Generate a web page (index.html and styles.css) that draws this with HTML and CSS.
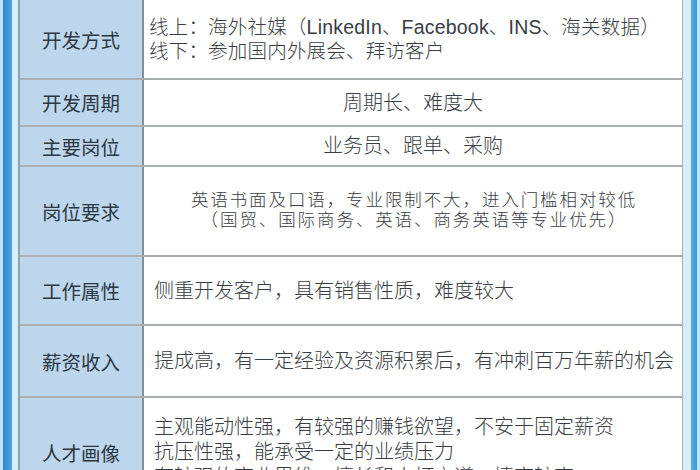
FILE: index.html
```html
<!DOCTYPE html>
<html lang="zh-CN">
<head>
<meta charset="utf-8">
<title>外贸业务员</title>
<link rel="stylesheet" href="styles.css">
</head>
<body>
<div class="page">
  <div class="edge edge-left"></div>
  <div class="table">
    <div class="row row-1">
      <div class="label">开发方式</div>
      <div class="value value-left value-tight">
        <div>线上：海外社媒（LinkedIn、Facebook、INS、海关数据）</div>
        <div>线下：参加国内外展会、拜访客户</div>
      </div>
    </div>
    <div class="row row-2">
      <div class="label">开发周期</div>
      <div class="value value-center">周期长、难度大</div>
    </div>
    <div class="row row-3">
      <div class="label">主要岗位</div>
      <div class="value value-center">业务员、跟单、采购</div>
    </div>
    <div class="row row-4">
      <div class="label">岗位要求</div>
      <div class="value value-center value-compact">
        <div>英语书面及口语，专业限制不大，进入门槛相对较低</div>
        <div>（国贸、国际商务、英语、商务英语等专业优先）</div>
      </div>
    </div>
    <div class="row row-5">
      <div class="label">工作属性</div>
      <div class="value value-left">侧重开发客户，具有销售性质，难度较大</div>
    </div>
    <div class="row row-6">
      <div class="label">薪资收入</div>
      <div class="value value-left">提成高，有一定经验及资源积累后，有冲刺百万年薪的机会</div>
    </div>
    <div class="row row-7">
      <div class="label">人才画像</div>
      <div class="value value-left value-loose">
        <div>主观能动性强，有较强的赚钱欲望，不安于固定薪资</div>
        <div>抗压性强，能承受一定的业绩压力</div>
        <div>有较强的商业思维，擅长和人打交道，情商较高</div>
      </div>
    </div>
  </div>
  <div class="edge edge-right"></div>
</div>
</body>
</html>
```
FILE: styles.css
```css
html, body {
  margin: 0;
  padding: 0;
  background: #c4e6f6;
  overflow: hidden;
}

body {
  font-family: "Liberation Sans", "Noto Sans CJK SC", sans-serif;
  font-weight: 300;
  color: #30373e;
}

.page {
  display: flex;
  width: 700px;
  height: 470px;
  overflow: hidden;
  align-items: flex-start;
}

.edge {
  align-self: stretch;
  box-sizing: border-box;
}

.edge-left {
  width: 18px;
  border-left: 3px solid #bde3f5;
  border-right: 6px solid #d3eff9;
  background: linear-gradient(to right, #2f86cc, #4ea4dc);
}

.edge-right {
  width: 17px;
  border-left: 8px solid #d6f0fa;
  border-right: 3px solid #bfe6f6;
  background: linear-gradient(to right, #5aaee0, #3d95d4);
}

.table {
  width: 665px;
  box-sizing: border-box;
  border-left: 2px solid #8ea2b2;
  border-right: 1px solid #a9b2ba;
  background: #ffffff;
  display: flex;
  flex-direction: column;
}

.row {
  display: grid;
  grid-template-columns: 124px 1fr;
  box-sizing: border-box;
  border-bottom: 2px solid #acafb2;
}

.row-1 { height: 80px; }
.row-2 { height: 47px; }
.row-3 { height: 40px; }
.row-4 { height: 90px; }
.row-5 { height: 69px; }
.row-6 { height: 72px; }
.row-7 { height: 110px; }

.label {
  background: #bdd6ec;
  border-right: 2px solid #7f8f9d;
  display: flex;
  align-items: center;
  justify-content: center;
  font-size: 19.5px;
  font-weight: 400;
  color: #2b3844;
}

.value {
  display: flex;
  flex-direction: column;
  justify-content: center;
  font-size: 20px;
  line-height: 24px;
  white-space: nowrap;
  color: #383d43;
}

.value-left {
  padding-left: 10px;
  align-items: flex-start;
}

.value-center {
  align-items: center;
  text-align: center;
}

.value-tight {
  padding-left: 5px;
  font-size: 19.5px;
  letter-spacing: 0.2px;
  line-height: 24px;
}

.value-compact {
  font-size: 17.5px;
  letter-spacing: 1.9px;
  line-height: 19.6px;
  padding-left: 2px;
}

.value-loose {
  line-height: 25px;
}
```
